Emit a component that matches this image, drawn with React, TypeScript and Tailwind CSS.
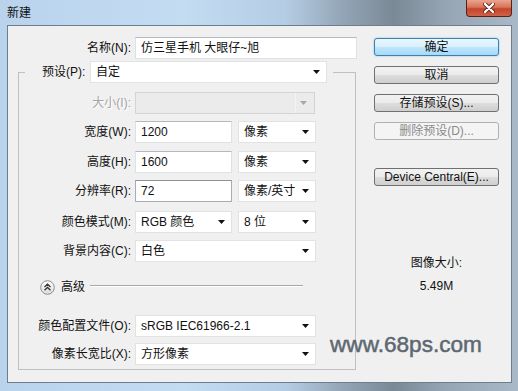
import React from 'react'

const font = "font-['Liberation_Sans','Noto_Sans_CJK_SC',sans-serif]"

function Arrow({ disabled = false }: { disabled?: boolean }) {
  return (
    <svg width="7" height="4" viewBox="0 0 7 4" className="shrink-0">
      <polygon points="0,0 7,0 3.5,4" fill={disabled ? '#a8a8a8' : '#111'} />
    </svg>
  )
}

function TextBox({ value, w, focused = false }: { value: string; w: string; focused?: boolean }) {
  return (
    <div
      className={`h-[22px] ${w} flex items-center px-[5px] bg-white border text-[12px] text-[#111] ${
        focused ? 'border-[#a9adb3] border-t-[#8e9297]' : 'border-[#dde1e6] border-t-[#b5b8bd]'
      }`}
    >
      {value}
    </div>
  )
}

function Select({ value, w, disabled = false }: { value: string; w: string; disabled?: boolean }) {
  return (
    <div
      className={`h-[22px] ${w} flex items-center justify-between pl-[5px] pr-[6px] border text-[12px] ${
        disabled
          ? 'bg-[#ebebeb] border-[#d4d4d4] text-[#999]'
          : 'bg-white border-[#e2e2e2] text-[#111]'
      }`}
    >
      <span>{value}</span>
      {disabled ? (
        <div className="h-full w-[16px] border-l border-[#f4f4f4] flex items-center justify-center -mr-[3px]">
          <Arrow disabled />
        </div>
      ) : (
        <Arrow />
      )}
    </div>
  )
}

function Row({ label, children, mt, disabled = false }: { label: string; children: React.ReactNode; mt: string; disabled?: boolean }) {
  return (
    <div className={`flex items-center h-[22px] ${mt}`}>
      <div
        className={`w-[116px] pr-[4px] text-right text-[12px] ${
          disabled ? 'text-[#a5a5a5] [text-shadow:1px_1px_0_#ffffff]' : 'text-[#111]'
        }`}
      >
        {label}
      </div>
      {children}
    </div>
  )
}

function Button({ label, kind = 'normal', mt }: { label: string; kind?: 'default' | 'normal' | 'disabled'; mt: string }) {
  const look =
    kind === 'default'
      ? 'border-[#3c7fb1] bg-[linear-gradient(#eaf6fd_0%,#d9f0fc_50%,#bee6fd_51%,#a7d9f5_100%)] text-[#111] shadow-[0_0_2px_#6ec6ef]'
      : kind === 'disabled'
        ? 'border-[#adb2b5] bg-[#f4f4f4] text-[#8a8a8a]'
        : 'border-[#707070] bg-[linear-gradient(#f2f2f2_0%,#ebebeb_50%,#dddddd_51%,#cfcfcf_100%)] text-[#111]'
  return (
    <div className={`h-[18px] w-[125px] ${mt} flex items-center justify-center rounded-[3px] border text-[12px] ${look}`}>
      {label}
    </div>
  )
}

export default function App() {
  return (
    <div
      className={`w-[518px] h-[391px] flex flex-col overflow-hidden ${font} bg-[linear-gradient(to_right,#b9d3ed_0%,#c4dcf2_35%,#b5cde4_55%,#93a6b7_66%,#7b8996_76%,#95a5b3_86%,#a9b9c7_100%)]`}
    >
      {/* title bar */}
      <div className="h-[25px] flex items-start justify-between shrink-0">
        <span className="ml-[7px] mt-[4px] text-[12px] text-[#111]">新建</span>
        <div className="mr-[6px] w-[46px] h-[17px] rounded-b-[4px] border border-t-0 border-[#5e1f14] bg-[linear-gradient(#e9a58f_0%,#d9735a_45%,#c3452b_55%,#d0614a_100%)] flex items-center justify-center">
          <svg width="12" height="10" viewBox="0 0 12 10">
            <path d="M2 1 L10 9 M10 1 L2 9" stroke="#5a2217" strokeWidth="4" strokeLinecap="round" />
            <path d="M2 1 L10 9 M10 1 L2 9" stroke="#ffffff" strokeWidth="2.4" strokeLinecap="round" />
          </svg>
        </div>
      </div>

      {/* client area */}
      <div className="relative ml-[7px] mr-[6px] h-[358px] shrink-0 flex border border-[#6d7d8d] bg-[#f0f0f0]">
        {/* left column */}
        <div className="w-[352px] flex flex-col">
          <div className="flex items-center h-[22px] mt-[11px]">
            <div className="w-[127px] pr-[4px] text-right text-[12px] text-[#111]">名称(N):</div>
            <TextBox value="仿三星手机 大眼仔~旭" w="w-[222px]" />
          </div>

          <fieldset className="ml-[10px] mt-[2px] w-[338px] border border-[#c0c0c0] pb-[4px] pt-[9px]">
            <legend className="ml-[6px] pl-[17px] pr-[6px]">
              <div className="flex items-center h-[22px]">
                <span className="w-[48px] text-[12px] text-[#111]">预设(P):</span>
                <Select value="自定" w="w-[237px]" />
              </div>
            </legend>

            <Row label="大小(I):" mt="mt-0" disabled>
              <Select value="" w="w-[180px]" disabled />
            </Row>
            <Row label="宽度(W):" mt="mt-[7px]">
              <TextBox value="1200" w="w-[97px]" />
              <div className="ml-[6px]">
                <Select value="像素" w="w-[78px]" />
              </div>
            </Row>
            <Row label="高度(H):" mt="mt-[8px]">
              <TextBox value="1600" w="w-[97px]" />
              <div className="ml-[6px]">
                <Select value="像素" w="w-[78px]" />
              </div>
            </Row>
            <Row label="分辨率(R):" mt="mt-[7px]">
              <TextBox value="72" w="w-[97px]" focused />
              <div className="ml-[6px]">
                <Select value="像素/英寸" w="w-[78px]" />
              </div>
            </Row>
            <Row label="颜色模式(M):" mt="mt-[9px]">
              <Select value="RGB 颜色" w="w-[97px]" />
              <div className="ml-[6px]">
                <Select value="8 位" w="w-[78px]" />
              </div>
            </Row>
            <Row label="背景内容(C):" mt="mt-[7px]">
              <Select value="白色" w="w-[181px]" />
            </Row>

            {/* advanced */}
            <div className="flex items-center h-[16px] mt-[17px] ml-[21px]">
              <svg width="15" height="15" viewBox="0 0 15 15" className="shrink-0">
                <defs>
                  <linearGradient id="adv" x1="0" y1="0" x2="0" y2="1">
                    <stop offset="0" stopColor="#ffffff" />
                    <stop offset="1" stopColor="#dcdcdc" />
                  </linearGradient>
                </defs>
                <circle cx="7.5" cy="7.5" r="6.8" fill="url(#adv)" stroke="#8d8d8d" strokeWidth="1" />
                <path d="M4.5 7 L7.5 4.2 L10.5 7 M4.5 10.3 L7.5 7.5 L10.5 10.3" fill="none" stroke="#333" strokeWidth="1.3" />
              </svg>
              <span className="ml-[6px] text-[12px] text-[#111]">高级</span>
              <div className="ml-[5px] w-[213px] h-[2px] -mt-[3px] border-t border-[#a9a9a9] border-b border-b-white" />
            </div>

            <Row label="颜色配置文件(O):" mt="mt-[20px]">
              <Select value="sRGB IEC61966-2.1" w="w-[181px]" />
            </Row>
            <Row label="像素长宽比(X):" mt="mt-[6px]">
              <Select value="方形像素" w="w-[181px]" />
            </Row>
          </fieldset>
        </div>

        {/* right column */}
        <div className="flex-1 flex flex-col items-start pl-[14px] pt-[12px]">
          <Button label="确定" kind="default" mt="mt-0" />
          <Button label="取消" mt="mt-[10px]" />
          <Button label="存储预设(S)..." mt="mt-[10px]" />
          <Button label="删除预设(D)..." kind="disabled" mt="mt-[10px]" />
          <Button label="Device Central(E)..." mt="mt-[28px]" />
          <div className="w-[125px] mt-[68px] h-[16px] text-center text-[12px] text-[#111]">图像大小:</div>
          <div className="w-[125px] mt-[7px] h-[16px] text-center text-[12px] text-[#111]">5.49M</div>
        </div>

        {/* watermark */}
        <div className="absolute left-[322px] top-[308px] text-[22.6px] leading-none text-[#5e6870] [-webkit-text-stroke:0.5px_#5e6870] font-['Liberation_Sans',sans-serif]">
          www.68ps.com
        </div>
      </div>
    </div>
  )
}
